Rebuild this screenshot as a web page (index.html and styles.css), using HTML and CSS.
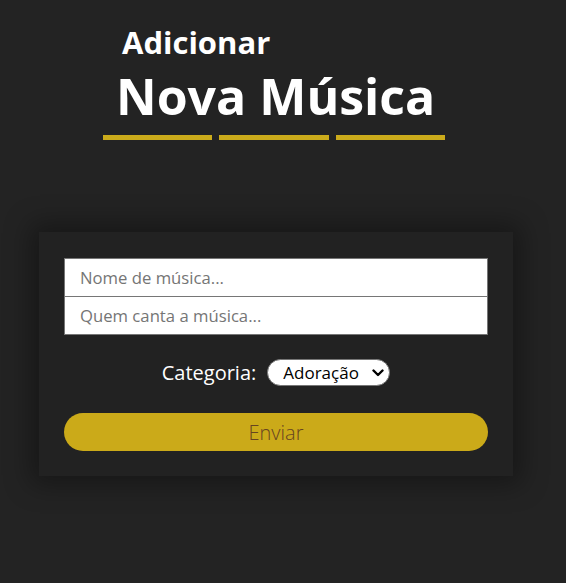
FILE: index.html
```html
<!DOCTYPE html>
<html lang="pt">
<head>
<meta charset="utf-8">
<link rel="stylesheet" href="styles.css">
</head>
<body>
<header class="hero">
  <h2 class="hero-sub">Adicionar</h2>
  <h1 class="hero-title">Nova Música</h1>
  <div class="bars"><span></span><span></span><span></span></div>
</header>
<main class="card">
  <form class="form">
    <div class="fields">
      <input type="text" class="field" placeholder="Nome de música...">
      <input type="text" class="field" placeholder="Quem canta a música...">
    </div>
    <div class="cat-row">
      <label class="cat-label" for="cat">Categoria:</label>
      <span class="select-wrap">
        <select id="cat" class="cat-select">
          <option>Adoração</option>
        </select>
        <svg class="chev" width="12" height="8" viewBox="0 0 12 8"><path d="M1.5 1.5 L6 6 L10.5 1.5" fill="none" stroke="#000" stroke-width="2.4" stroke-linecap="round" stroke-linejoin="round"/></svg>
      </span>
    </div>
    <button type="button" class="send">Enviar</button>
  </form>
</main>
</body>
</html>
```
FILE: styles.css
```css
* { box-sizing: border-box; }
html, body { margin: 0; padding: 0; }
body {
  background: #232323;
  font-family: "Open Sans", "DejaVu Sans", sans-serif;
  color: #fff;
  width: 566px;
  height: 583px;
  overflow: hidden;
}
.hero {
  width: 342px;
  margin: 0 0 0 103px;
  padding-top: 24px;
}
.hero-sub {
  margin: 0 0 0 19px;
  font-size: 31px;
  font-weight: 700;
  line-height: 36px;
  white-space: nowrap;
}
.hero-title {
  margin: 0 0 0 13px;
  font-size: 50px;
  font-weight: 700;
  line-height: 72px;
  white-space: nowrap;
}
.bars {
  display: flex;
  gap: 7px;
  margin-top: 3px;
}
.bars span {
  flex: 1;
  height: 5px;
  background: #cbab1b;
}
.card {
  width: 474px;
  margin: 92px 0 0 39px;
  background: #222222;
  box-shadow: 0 0 25px 8px rgba(0,0,0,0.35);
  padding: 26px 25px 25px;
}
.fields {
  display: flex;
  flex-direction: column;
}
.field {
  width: 424px;
  height: 39px;
  margin: 0;
  border: 1px solid #767676;
  padding: 0 15px;
  font-family: "Open Sans", sans-serif;
  font-size: 16.7px;
  color: #333;
  background: #fff;
  outline: none;
}
.field + .field { margin-top: -1px; }
.field::placeholder { color: #757575; }
.cat-row {
  display: flex;
  justify-content: center;
  align-items: center;
  gap: 11px;
  margin-top: 24px;
}
.cat-label {
  font-size: 20px;
  color: #fff;
}
.select-wrap {
  position: relative;
  display: inline-flex;
}
.cat-select {
  appearance: none;
  -webkit-appearance: none;
  font-family: "Open Sans", sans-serif;
  font-size: 17px;
  color: #000;
  background: #fff;
  border: 1px solid #767676;
  border-radius: 14px;
  height: 27px;
  width: 123px;
  padding: 0 24px 0 15px;
  margin: 0;
}
.chev {
  position: absolute;
  right: 6px;
  top: 10px;
  pointer-events: none;
}
.send {
  display: block;
  width: 424px;
  height: 38px;
  margin-top: 27px;
  border: none;
  border-radius: 19px;
  background: #cbaa19;
  color: #674421;
  font-family: "Open Sans", sans-serif;
  font-weight: 300;
  font-size: 20px;
}
```
